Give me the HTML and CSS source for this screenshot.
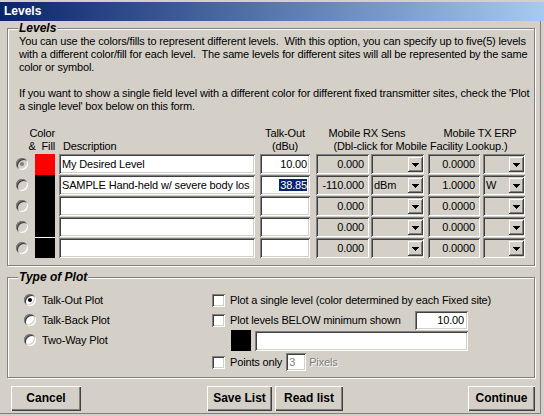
FILE: index.html
```html
<!DOCTYPE html>
<html>
<head>
<meta charset="utf-8">
<title>Levels</title>
<link rel="stylesheet" href="styles.css">
</head>
<body>
<div class="window">
  <div class="titlebar">Levels</div>
  <div class="client">
    <fieldset class="group levels">
      <legend>Levels</legend>
      <p class="intro">You can use the colors/fills to represent different levels.&nbsp; With this option, you can specify up to five(5) levels<br>with a different color/fill for each level.&nbsp; The same levels for different sites will all be represented by the same<br>color or symbol.<br><br>If you want to show a single field level with a different color for different fixed transmitter sites, check the 'Plot<br>a single level' box below on this form.</p>

      <div class="grid head">
        <span class="h-color">Color</span>
        <span class="h-fill">&amp;&nbsp; Fill</span>
        <span class="h-desc">Description</span>
        <span class="h-talk1">Talk-Out</span>
        <span class="h-talk2">(dBu)</span>
        <span class="h-rx">Mobile RX Sens</span>
        <span class="h-tx">Mobile TX ERP</span>
        <span class="h-dbl">(Dbl-click for Mobile Facility Lookup.)</span>
      </div>

      <div class="rows">
        <div class="grid row">
          <span class="radio dis checked"></span>
          <span class="swatch red"></span>
          <span class="field white desc">My Desired Level</span>
          <span class="field white num talk">10.00</span>
          <span class="field gray num rx">0.000</span>
          <span class="field gray combo rxu"><span class="ctext"></span><span class="dd"><svg width="7" height="4" viewBox="0 0 7 4"><path d="M0 0h7v1h-1v1h-1v1h-1v1h-1v-1h-1v-1h-1v-1h-1z" fill="#000"/></svg></span></span>
          <span class="field gray num tx">0.0000</span>
          <span class="field gray combo txu"><span class="ctext"></span><span class="dd"><svg width="7" height="4" viewBox="0 0 7 4"><path d="M0 0h7v1h-1v1h-1v1h-1v1h-1v-1h-1v-1h-1v-1h-1z" fill="#000"/></svg></span></span>
        </div>
        <div class="grid row">
          <span class="radio dis"></span>
          <span class="swatch"></span>
          <span class="field white desc">SAMPLE Hand-held w/ severe body los</span>
          <span class="field white num talk"><span class="sel">38.85</span></span>
          <span class="field gray num rx">-110.000</span>
          <span class="field gray combo rxu"><span class="ctext">dBm</span><span class="dd"><svg width="7" height="4" viewBox="0 0 7 4"><path d="M0 0h7v1h-1v1h-1v1h-1v1h-1v-1h-1v-1h-1v-1h-1z" fill="#000"/></svg></span></span>
          <span class="field gray num tx">1.0000</span>
          <span class="field gray combo txu"><span class="ctext">W</span><span class="dd"><svg width="7" height="4" viewBox="0 0 7 4"><path d="M0 0h7v1h-1v1h-1v1h-1v1h-1v-1h-1v-1h-1v-1h-1z" fill="#000"/></svg></span></span>
        </div>
        <div class="grid row">
          <span class="radio dis"></span>
          <span class="swatch"></span>
          <span class="field white desc"></span>
          <span class="field white num talk"></span>
          <span class="field gray num rx">0.000</span>
          <span class="field gray combo rxu"><span class="ctext"></span><span class="dd"><svg width="7" height="4" viewBox="0 0 7 4"><path d="M0 0h7v1h-1v1h-1v1h-1v1h-1v-1h-1v-1h-1v-1h-1z" fill="#000"/></svg></span></span>
          <span class="field gray num tx">0.0000</span>
          <span class="field gray combo txu"><span class="ctext"></span><span class="dd"><svg width="7" height="4" viewBox="0 0 7 4"><path d="M0 0h7v1h-1v1h-1v1h-1v1h-1v-1h-1v-1h-1v-1h-1z" fill="#000"/></svg></span></span>
        </div>
        <div class="grid row">
          <span class="radio dis"></span>
          <span class="swatch short"></span>
          <span class="field white desc"></span>
          <span class="field white num talk"></span>
          <span class="field gray num rx">0.000</span>
          <span class="field gray combo rxu"><span class="ctext"></span><span class="dd"><svg width="7" height="4" viewBox="0 0 7 4"><path d="M0 0h7v1h-1v1h-1v1h-1v1h-1v-1h-1v-1h-1v-1h-1z" fill="#000"/></svg></span></span>
          <span class="field gray num tx">0.0000</span>
          <span class="field gray combo txu"><span class="ctext"></span><span class="dd"><svg width="7" height="4" viewBox="0 0 7 4"><path d="M0 0h7v1h-1v1h-1v1h-1v1h-1v-1h-1v-1h-1v-1h-1z" fill="#000"/></svg></span></span>
        </div>
        <div class="grid row">
          <span class="radio dis"></span>
          <span class="swatch last"></span>
          <span class="field white desc"></span>
          <span class="field white num talk"></span>
          <span class="field gray num rx">0.000</span>
          <span class="field gray combo rxu"><span class="ctext"></span><span class="dd"><svg width="7" height="4" viewBox="0 0 7 4"><path d="M0 0h7v1h-1v1h-1v1h-1v1h-1v-1h-1v-1h-1v-1h-1z" fill="#000"/></svg></span></span>
          <span class="field gray num tx">0.0000</span>
          <span class="field gray combo txu"><span class="ctext"></span><span class="dd"><svg width="7" height="4" viewBox="0 0 7 4"><path d="M0 0h7v1h-1v1h-1v1h-1v1h-1v-1h-1v-1h-1v-1h-1z" fill="#000"/></svg></span></span>
        </div>
      </div>
    </fieldset>

    <fieldset class="group plot">
      <legend>Type of Plot</legend>
      <div class="plot-body">
        <div class="plot-types">
          <div class="opt"><span class="radio checked"></span><span>Talk-Out Plot</span></div>
          <div class="opt"><span class="radio"></span><span>Talk-Back Plot</span></div>
          <div class="opt"><span class="radio"></span><span>Two-Way Plot</span></div>
        </div>
        <div class="plot-opts">
          <div class="opt"><span class="check"></span><span>Plot a single level (color determined by each Fixed site)</span></div>
          <div class="opt"><span class="check"></span><span class="grow">Plot levels BELOW minimum shown</span><span class="field white num minbox">10.00</span></div>
          <div class="swrow"><span class="swatch2"></span><span class="field white wide"></span></div>
          <div class="opt"><span class="check"></span><span>Points only</span><span class="field white pix">3</span><span class="distext">Pixels</span></div>
        </div>
      </div>
    </fieldset>

    <div class="buttons">
      <div class="btn cancel">Cancel</div>
      <div class="btn save">Save List</div>
      <div class="btn read">Read list</div>
      <div class="btn cont">Continue</div>
    </div>
  </div>
</div>
</body>
</html>
```
FILE: styles.css
```css
* { box-sizing: border-box; }
body {
  margin: 0;
  background: #D4D0C8;
  font: 11px/13px "Liberation Sans", Arial, sans-serif;
  letter-spacing: -0.15px;
  color: #000;
}
.window {
  width: 544px;
  height: 416px;
  background: #D4D0C8;
  overflow: hidden;
}
.titlebar {
  margin-top: 2px;
  height: 19px;
  background: linear-gradient(to right, #0A246A, #A6CAF0);
  color: #fff;
  font-weight: bold;
  font-size: 12px;
  letter-spacing: 0;
  line-height: 19px;
  padding-left: 4px;
}
.client {
  width: 541px;
  height: 393px;
  border-right: 1px solid #808080;
  border-bottom: 1px solid #808080;
}
.group {
  margin: 0 0 0 7px;
  width: 528px;
  min-width: 0;
  padding: 0;
  border: 1px solid #808080;
  box-shadow: inset 1px 1px 0 #fff, 1px 1px 0 #fff;
}
.group legend {
  margin-left: 10px;
  padding: 0 1px;
  font: bold italic 12px/14px "Liberation Sans", Arial, sans-serif;
  letter-spacing: 0;
  background: #D4D0C8;
}
.levels { padding-bottom: 7px; }
.intro {
  margin: 0 0 14px 11px;
  white-space: nowrap;
}
.grid {
  display: grid;
  grid-template-columns: 20px 20px 4px 196px 5px 50px 6px 53px 2px 53px 4px 52px 3px 42px;
  margin-left: 7px;
  white-space: nowrap;
}
.head { grid-template-rows: 13px 13px; }
.head span { display: block; }
.h-color { grid-column: 1 / 3; grid-row: 1; text-align: right; }
.h-fill { grid-column: 1 / 3; grid-row: 2; text-align: right; }
.h-desc { grid-column: 4; grid-row: 2; padding-left: 4px; }
.h-talk1 { grid-column: 6; grid-row: 1; text-align: center; }
.h-talk2 { grid-column: 6; grid-row: 2; text-align: center; }
.h-rx { grid-column: 8 / 11; grid-row: 1; text-align: center; padding-right: 6px; }
.h-tx { grid-column: 12 / 15; grid-row: 1; text-align: center; padding-left: 7px; }
.h-dbl { grid-column: 8 / 15; grid-row: 2; text-align: center; }

.rows {
  margin-top: 1px;
  display: flex;
  flex-direction: column;
  gap: 1px;
}
.row { grid-template-rows: 20px; align-items: center; }

.radio {
  display: block;
  position: relative;
  flex: none;
  width: 12px;
  height: 12px;
  border-radius: 50%;
  background: #fff;
  box-shadow: inset 1px 1px 0 #808080, inset -1px -1px 0 #fff, inset 2px 2px 0 #404040, inset -2px -2px 0 #D4D0C8;
}
.radio.dis { background: #D4D0C8; }
.radio.checked::after {
  content: "";
  position: absolute;
  left: 4px;
  top: 4px;
  width: 4px;
  height: 4px;
  border-radius: 50%;
  background: #000;
}
.radio.dis.checked::after { background: #808080; }
.row .radio { grid-column: 1; margin-left: 1px; }

.swatch {
  grid-column: 2;
  align-self: start;
  height: 21px;
  background: #000;
}
.swatch.red { background: #ff0000; }
.swatch.short { height: 20px; }
.swatch.last { height: 20px; box-shadow: 0 -1px 0 #fff; }

.field {
  display: block;
  height: 20px;
  overflow: hidden;
  white-space: nowrap;
  line-height: 16px;
  padding: 2px 3px;
  box-shadow: inset 1px 1px 0 #808080, inset -1px -1px 0 #fff, inset 2px 2px 0 #404040, inset -2px -2px 0 #D4D0C8;
}
.field.white { background: #fff; }
.field.gray { background: #D4D0C8; }
.field.num { text-align: right; }
.desc { grid-column: 4; padding-left: 3px; }
.talk { grid-column: 6; padding-right: 3px; }
.rx { grid-column: 8; padding-right: 5px; }
.rxu { grid-column: 10; }
.tx { grid-column: 12; padding-right: 5px; }
.txu { grid-column: 14; }
.sel { background: #0A246A; color: #fff; padding: 0 0 0 1px; }

.combo {
  display: flex;
  padding: 2px 1px 2px 3px;
}
.ctext { flex: 1; }
.dd {
  width: 16px;
  height: 16px;
  display: flex;
  align-items: center;
  justify-content: center;
  background: #D4D0C8;
  box-shadow: inset 1px 1px 0 #D4D0C8, inset -1px -1px 0 #404040, inset 2px 2px 0 #fff, inset -2px -2px 0 #808080;
}
.dd svg { display: block; shape-rendering: crispEdges; margin-top: 1px; }

.plot { margin-top: 4px; padding-bottom: 5px; }
.plot-body {
  display: flex;
  padding-top: 6px;
}
.plot-types {
  margin-left: 16px;
  width: 188px;
  flex: none;
}
.opt {
  display: flex;
  align-items: center;
  height: 20px;
  white-space: nowrap;
}
.plot-types .radio { margin-right: 6px; }
.plot-opts { width: 256px; flex: none; }
.check {
  display: block;
  flex: none;
  width: 13px;
  height: 13px;
  margin-right: 5px;
  background: #fff;
  box-shadow: inset 1px 1px 0 #808080, inset -1px -1px 0 #fff, inset 2px 2px 0 #404040, inset -2px -2px 0 #D4D0C8;
}
.grow { flex: 1; }
.minbox { flex: none; width: 53px; height: 19px; line-height: 15px; padding-right: 4px; }
.swrow {
  display: flex;
  height: 21px;
  padding-left: 19px;
  margin-bottom: 1px;
}
.swatch2 { flex: none; width: 20px; height: 21px; background: #000; margin-right: 4px; }
.wide { flex: 1; height: 20px; margin-top: 1px; }
.pix {
  flex: none;
  width: 20px;
  height: 18px;
  line-height: 14px;
  margin-left: 4px;
  color: #808080;
  padding-left: 3px;
}
.distext {
  margin-left: 3px;
  color: #808080;
  text-shadow: 1px 1px 0 #fff;
}

.buttons {
  display: flex;
  margin-top: 8px;
  padding-left: 11px;
  padding-right: 5px;
}
.btn {
  height: 25px;
  line-height: 25px;
  text-align: center;
  font-weight: bold;
  font-size: 12px;
  letter-spacing: 0;
  background: #D4D0C8;
  box-shadow: inset 1px 1px 0 #fff, inset -1px -1px 0 #404040, inset -2px -2px 0 #808080;
}
.cancel { width: 70px; }
.save { width: 65px; margin-left: 126px; }
.read { width: 68px; margin-left: 3px; }
.cont { width: 67px; margin-left: auto; }
```
